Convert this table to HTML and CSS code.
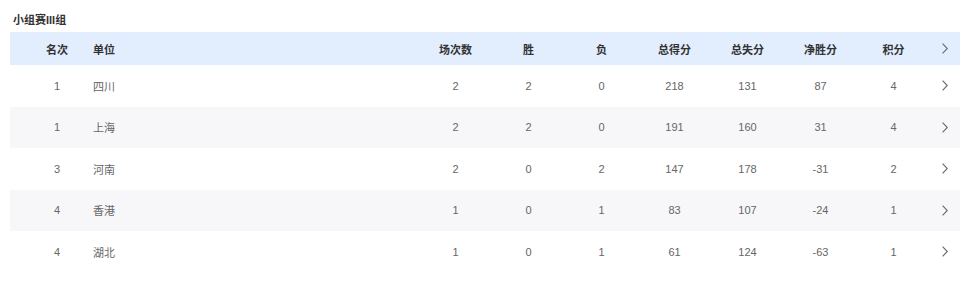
FILE: index.html
```html
<!DOCTYPE html>
<html lang="zh">
<head>
<meta charset="utf-8">
<link rel="stylesheet" href="styles.css">
</head>
<body>
<div class="page">
  <div class="title">小组赛III组</div>
  <div class="table">
    <div class="row head">
      <div class="c rank">名次</div>
      <div class="c team">单位</div>
      <div class="c num">场次数</div>
      <div class="c num">胜</div>
      <div class="c num">负</div>
      <div class="c num">总得分</div>
      <div class="c num">总失分</div>
      <div class="c num">净胜分</div>
      <div class="c num">积分</div>
      <div class="c arrow"><svg width="6" height="11" viewBox="0 0 6 11"><polyline points="0.6,0.6 5.3,5.5 0.6,10.4" fill="none" stroke="#666" stroke-width="1.1"/></svg></div>
    </div>
    <div class="row">
      <div class="c rank">1</div><div class="c team">四川</div>
      <div class="c num">2</div><div class="c num">2</div><div class="c num">0</div>
      <div class="c num">218</div><div class="c num">131</div><div class="c num">87</div><div class="c num">4</div>
      <div class="c arrow"><svg width="6" height="11" viewBox="0 0 6 11"><polyline points="0.6,0.6 5.3,5.5 0.6,10.4" fill="none" stroke="#666" stroke-width="1.1"/></svg></div>
    </div>
    <div class="row alt">
      <div class="c rank">1</div><div class="c team">上海</div>
      <div class="c num">2</div><div class="c num">2</div><div class="c num">0</div>
      <div class="c num">191</div><div class="c num">160</div><div class="c num">31</div><div class="c num">4</div>
      <div class="c arrow"><svg width="6" height="11" viewBox="0 0 6 11"><polyline points="0.6,0.6 5.3,5.5 0.6,10.4" fill="none" stroke="#666" stroke-width="1.1"/></svg></div>
    </div>
    <div class="row">
      <div class="c rank">3</div><div class="c team">河南</div>
      <div class="c num">2</div><div class="c num">0</div><div class="c num">2</div>
      <div class="c num">147</div><div class="c num">178</div><div class="c num">-31</div><div class="c num">2</div>
      <div class="c arrow"><svg width="6" height="11" viewBox="0 0 6 11"><polyline points="0.6,0.6 5.3,5.5 0.6,10.4" fill="none" stroke="#666" stroke-width="1.1"/></svg></div>
    </div>
    <div class="row alt">
      <div class="c rank">4</div><div class="c team">香港</div>
      <div class="c num">1</div><div class="c num">0</div><div class="c num">1</div>
      <div class="c num">83</div><div class="c num">107</div><div class="c num">-24</div><div class="c num">1</div>
      <div class="c arrow"><svg width="6" height="11" viewBox="0 0 6 11"><polyline points="0.6,0.6 5.3,5.5 0.6,10.4" fill="none" stroke="#666" stroke-width="1.1"/></svg></div>
    </div>
    <div class="row">
      <div class="c rank">4</div><div class="c team">湖北</div>
      <div class="c num">1</div><div class="c num">0</div><div class="c num">1</div>
      <div class="c num">61</div><div class="c num">124</div><div class="c num">-63</div><div class="c num">1</div>
      <div class="c arrow"><svg width="6" height="11" viewBox="0 0 6 11"><polyline points="0.6,0.6 5.3,5.5 0.6,10.4" fill="none" stroke="#666" stroke-width="1.1"/></svg></div>
    </div>
  </div>
</div>
</body>
</html>
```
FILE: styles.css
```css
html, body {
  margin: 0;
  padding: 0;
  background: #ffffff;
}
body {
  font-family: "Liberation Sans", "Noto Sans CJK SC", sans-serif;
  font-size: 11px;
  color: #666666;
}
.page {
  padding-left: 10px;
}
.title {
  height: 32px;
  line-height: 20px;
  padding-top: 10px;
  box-sizing: border-box;
  padding-left: 3px;
  font-weight: bold;
  color: #333333;
}
.row {
  display: grid;
  grid-template-columns: 72px 1fr repeat(7, 73px) 30px;
  padding-left: 11px;
  height: 41.5px;
  align-items: center;
}
.row.head {
  height: 33px;
  background: #e2eefe;
  color: #333333;
  font-weight: bold;
}
.row.alt {
  background: #f7f7f9;
}
.c.rank, .c.num {
  text-align: center;
}
.c.team {
  text-align: left;
}
.c.arrow {
  display: flex;
  justify-content: center;
  align-items: center;
  padding-right: 1px;
}
.c.arrow svg {
  display: block;
}
```
